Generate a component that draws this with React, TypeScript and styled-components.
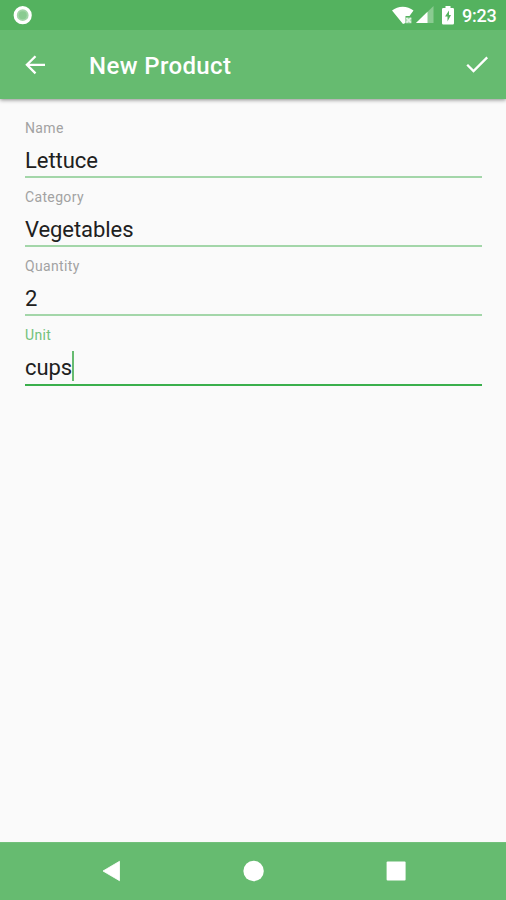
import React from "react";
import styled, { createGlobalStyle } from "styled-components";

const GlobalStyle = createGlobalStyle`
  * { box-sizing: border-box; }
  html, body { margin: 0; padding: 0; }
  body { background: #fafafa; font-family: Roboto, sans-serif; }
`;

const Screen = styled.div`
  width: 506px;
  height: 900px;
  display: flex;
  flex-direction: column;
  background: #fafafa;
  overflow: hidden;
`;

const StatusBar = styled.header`
  height: 30px;
  flex: none;
  padding: 0 9px 0 13px;
  display: flex;
  align-items: center;
  justify-content: space-between;
  background: #54b25f;
`;

const StatusIcons = styled.div`
  display: flex;
  align-items: center;

  svg:nth-of-type(2) { margin-left: 1px; }
  svg:nth-of-type(3) { margin-left: 8px; }
`;

const Clock = styled.time`
  width: 35px;
  margin-left: 8px;
  padding-top: 1px;
  color: #fff;
  font-size: 18px;
  line-height: 30px;
  font-weight: 500;
  letter-spacing: -0.25px;
  white-space: nowrap;
`;

const AppBar = styled.div`
  height: 69px;
  flex: none;
  padding: 0 17px 0 25px;
  display: flex;
  align-items: center;
  background: #66bb70;
  box-shadow: 0 1px 4px rgba(0, 0, 0, 0.45);
  clip-path: inset(0 0 -10px 0);
`;

const Title = styled.h1`
  flex: 1;
  margin: 2px 0 0 43px;
  color: #fff;
  font-size: 24px;
  line-height: 30px;
  font-weight: 500;
  letter-spacing: 0.38px;
`;

const IconButton = styled.button`
  display: flex;
  padding: 0;
  border: 0;
  background: none;
  color: #fff;
`;

const Form = styled.main`
  flex: 1;
  padding: 10px 24px 0 25px;
`;

const Field = styled.label<{ $active?: boolean }>`
  height: ${(p) => (p.$active ? 70 : 69)}px;
  display: flex;
  flex-direction: column;
  padding-top: 10px;
  border-bottom: 2px solid ${(p) => (p.$active ? "#3aaf4c" : "#a3d6a9")};
`;

const Label = styled.span<{ $active?: boolean }>`
  height: 18px;
  font-size: 14px;
  line-height: 18px;
  letter-spacing: 0.35px;
  color: ${(p) => (p.$active ? "#72c17b" : "#a2a2a2")};
`;

const ValueRow = styled.span`
  height: 30px;
  margin-top: 9px;
  display: flex;
  align-items: center;
`;

const Value = styled.span`
  font-size: 22px;
  line-height: 30px;
  letter-spacing: -0.06px;
  color: #202020;
`;

const Caret = styled.span`
  width: 2px;
  height: 30px;
  margin-top: -4px;
  background: #66bb70;
`;

const NavBar = styled.nav`
  height: 58px;
  flex: none;
  padding: 0 100px 2px 102px;
  display: flex;
  align-items: center;
  justify-content: space-between;
  background: #66bb70;
  border-top: 1px solid #72c07b;
`;

const fields = [
  { label: "Name", value: "Lettuce" },
  { label: "Category", value: "Vegetables" },
  { label: "Quantity", value: "2" },
  { label: "Unit", value: "cups", active: true },
];

const SyncIcon = () => (
  <svg width="20" height="20" viewBox="0 0 20 20">
    <circle cx="9.7" cy="10.2" r="7.5" fill="#a3d6a8" stroke="#fff" strokeWidth="3.2" />
    <circle cx="9.7" cy="10.2" r="4" fill="#8acb91" />
  </svg>
);

const WifiIcon = () => (
  <svg width="23" height="20" viewBox="0 0 23 20">
    <path d="M0 5.500C6 .4 15.500 .4 21.500 5.500L17.500 11H13.500V18L11 19Z" fill="#fff" />
    <path d="M14 12.500h5.500v5.800h-5.500Z" fill="#a9d9af" />
    <path d="M14.500 13l4.300 4.500m0-4.500l-4.300 4.500" stroke="#e4f4e6" strokeWidth="1.700" />
  </svg>
);

const SignalIcon = () => (
  <svg width="18" height="18" viewBox="0 0 18 18">
    <path d="M17.500 0V17H0Z" fill="#8acb91" />
    <path d="M11.500 5.800V17H0Z" fill="#fff" />
  </svg>
);

const BatteryIcon = () => (
  <svg width="12" height="19" viewBox="0 0 12 19">
    <path d="M3.500 0h5v2h2.300a1.200 1.200 0 0 1 1.200 1.200v14a1.200 1.200 0 0 1-1.200 1.200H1.200A1.200 1.200 0 0 1 0 17.200v-14A1.200 1.200 0 0 1 1.200 2h2.300Z" fill="#fff" />
    <path d="M7 4.500L3 10.500h2.500v5L9 9H7Z" fill="#54b25f" />
  </svg>
);

export default function App() {
  return (
    <Screen>
      <GlobalStyle />
      <StatusBar>
        <SyncIcon />
        <StatusIcons>
          <WifiIcon />
          <SignalIcon />
          <BatteryIcon />
          <Clock>9:23</Clock>
        </StatusIcons>
      </StatusBar>
      <AppBar>
        <IconButton aria-label="Back">
          <svg width="21" height="20" viewBox="0 0 21 20" fill="none" stroke="currentColor" strokeWidth="2.300">
            <path d="M20 9.800H2M10.500 1.200L1.900 9.800l8.600 8.600" />
          </svg>
        </IconButton>
        <Title>New Product</Title>
        <IconButton aria-label="Save">
          <svg width="23" height="18" viewBox="0 0 23 18" fill="none" stroke="currentColor" strokeWidth="2.300">
            <path d="M1.200 8.800L7.500 15.100L21.200 1.400" />
          </svg>
        </IconButton>
      </AppBar>
      <Form>
        {fields.map((f) => (
          <Field key={f.label} $active={f.active}>
            <Label $active={f.active}>{f.label}</Label>
            <ValueRow>
              <Value>{f.value}</Value>
              {f.active && <Caret />}
            </ValueRow>
          </Field>
        ))}
      </Form>
      <NavBar>
        <IconButton aria-label="Back">
          <svg width="18" height="22" viewBox="0 0 18 22">
            <path d="M1 11L17.500 1.300V20.700Z" fill="#fff" stroke="#fff" strokeWidth=".8" strokeLinejoin="round" />
          </svg>
        </IconButton>
        <IconButton aria-label="Home">
          <svg width="22" height="22" viewBox="0 0 22 22">
            <circle cx="11.600" cy="11" r="10.200" fill="#fff" />
          </svg>
        </IconButton>
        <IconButton aria-label="Recents">
          <svg width="20" height="20" viewBox="0 0 20 20">
            <rect x=".6" y=".6" width="19" height="18.800" rx="1" fill="#fff" />
          </svg>
        </IconButton>
      </NavBar>
    </Screen>
  );
}
